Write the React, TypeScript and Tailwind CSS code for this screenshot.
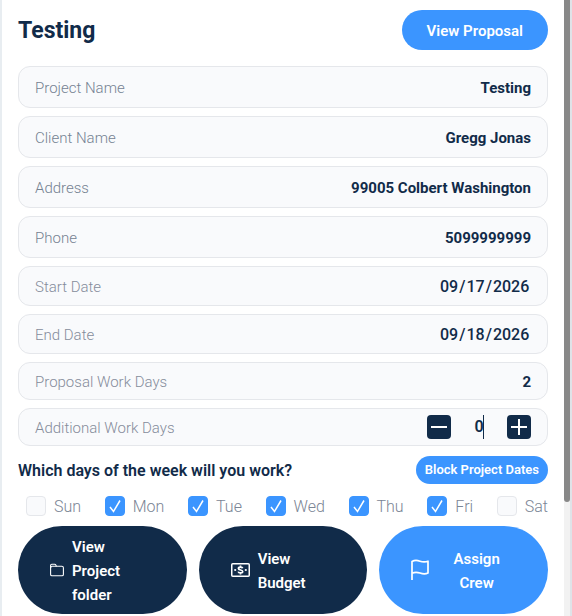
import React, { useState } from "react";

const details = [
  { label: "Project Name", value: "Testing" },
  { label: "Client Name", value: "Gregg Jonas" },
  { label: "Address", value: "99005 Colbert Washington" },
  { label: "Phone", value: "5099999999" },
];

const weekDays = ["Sun", "Mon", "Tue", "Wed", "Thu", "Fri", "Sat"];

const rowClass =
  "flex items-center justify-between rounded-xl border border-[#e5e7eb] bg-[#f9fafc] px-4 text-[15px] font-light";

function FolderIcon() {
  return (
    <svg viewBox="0 0 14 14" className="h-3.5 w-3.5 shrink-0" fill="none" stroke="currentColor" strokeWidth="1.1">
      <path d="M.6 11.500V2.600C.6 1.700 1.100 1.200 1.800 1.200h2.800c.6 0 1 .2 1.200.7l.5 1.300h5.500c1 0 1.600.6 1.600 1.500v6.800c0 .8-.6 1.300-1.400 1.300H2C1.100 12.800.6 12.300.6 11.500Z" />
      <path d="M.6 4.800C.8 3.800 1.400 3.300 2.200 3.300h4.300" />
    </svg>
  );
}

function MoneyIcon() {
  return (
    <svg viewBox="0 0 19 14" className="h-3.5 w-[19px] shrink-0" fill="none" stroke="currentColor">
      <rect x=".75" y=".75" width="17.5" height="12.5" rx="1" strokeWidth="1.5" />
      <path
        d="M11.700 5.200C11.500 4.500 10.700 4.200 9.500 4.200S7.400 4.600 7.400 5.500c0 2 4.300 1 4.300 3 0 1-.9 1.400-2.200 1.400s-2.100-.4-2.300-1.300M9.500 2.600v1.600M9.500 9.900v1.600"
        strokeWidth="1.700"
      />
      <circle cx="4.200" cy="7" r="1.100" fill="currentColor" stroke="none" />
      <circle cx="14.800" cy="7" r="1.100" fill="currentColor" stroke="none" />
    </svg>
  );
}

function FlagIcon() {
  return (
    <svg viewBox="0 0 18 22" className="h-[22px] w-[18px] shrink-0" fill="none" stroke="currentColor" strokeWidth="1.700">
      <path d="M1 21V2.500C4 .8 6.200 1.200 9 2.200c2.800 1 5 1.200 8 0V14c-3 1.400-5.200 1-8 0-2.800-1-5-1.200-8 .2" strokeLinejoin="round" />
    </svg>
  );
}

export default function ProjectPanel() {
  const [startDate, setStartDate] = useState("2026-09-17");
  const [endDate, setEndDate] = useState("2026-09-18");
  const [extraDays, setExtraDays] = useState(0);
  const [workDays, setWorkDays] = useState(["Mon", "Tue", "Wed", "Thu", "Fri"]);

  function toggleDay(day: string) {
    setWorkDays((prev) =>
      prev.includes(day) ? prev.filter((d) => d !== day) : [...prev, day]
    );
  }

  const dates = [
    { id: "start-date", label: "Start Date", value: startDate, onChange: setStartDate },
    { id: "end-date", label: "End Date", value: endDate, onChange: setEndDate },
  ];

  return (
    <div className="flex min-h-screen border-x-2 border-l-[#e8edf1] border-r-[#dfe3e8] bg-white font-[Roboto,sans-serif] text-[#112b49]">
      <main className="min-w-0 flex-1 px-4 pt-2.5">
        <header className="mb-4 flex items-center justify-between">
          <h1 className="pt-0.5 text-[23px] leading-8 font-bold">Testing</h1>
          <button className="h-10 rounded-full bg-[#3b95ff] px-6 pt-0.5 text-[15px] font-semibold text-white">
            <span className="px-px">View Proposal</span>
          </button>
        </header>

        <div className="flex flex-col gap-2">
          {details.map((d) => (
            <div key={d.label} className={`${rowClass} h-[42px] pt-0.5 text-[#758292]`}>
              <span>{d.label}</span>
              <span className="font-bold text-[#112b49]">{d.value}</span>
            </div>
          ))}

          {dates.map((d) => (
            <div key={d.id} className={`${rowClass} h-10 pt-0.5 text-[#858c9b]`}>
              <label htmlFor={d.id}>{d.label}</label>
              <input
                id={d.id}
                type="date"
                value={d.value}
                onChange={(e) => d.onChange(e.target.value)}
                className="w-[92px] bg-transparent text-base font-medium text-[#112b49] focus:outline-none [&::-webkit-calendar-picker-indicator]:hidden"
              />
            </div>
          ))}

          <div className={`${rowClass} h-[38px] pt-0.5 text-[#858c9b]`}>
            <span>Proposal Work Days</span>
            <span className="font-bold text-[#112b49]">2</span>
          </div>

          <div className={`${rowClass} h-[38px] text-[#858c9b]`}>
            <label htmlFor="extra-days" className="pt-0.5">
              Additional Work Days
            </label>
            <div className="flex items-center">
              <button
                aria-label="Remove a day"
                onClick={() => setExtraDays(Math.max(0, extraDays - 1))}
                className="flex size-6 items-center justify-center rounded bg-[#112b49] text-white"
              >
                <svg viewBox="0 0 16 16" className="size-4" stroke="currentColor" strokeWidth="2">
                  <path d="M0 8h16" />
                </svg>
              </button>
              <div className="relative">
                <input
                  id="extra-days"
                  type="text"
                  inputMode="numeric"
                  value={extraDays}
                  onChange={(e) => setExtraDays(Number(e.target.value) || 0)}
                  className="w-14 bg-transparent text-center text-base font-semibold text-[#112b49] caret-transparent focus:outline-none"
                />
                <span className="absolute inset-y-0 left-8 w-px bg-[#112b49]" />
              </div>
              <button
                aria-label="Add a day"
                onClick={() => setExtraDays(extraDays + 1)}
                className="flex size-6 items-center justify-center rounded bg-[#112b49] text-white"
              >
                <svg viewBox="0 0 16 16" className="size-4" stroke="currentColor" strokeWidth="2">
                  <path d="M0 8h16M8 0v16" />
                </svg>
              </button>
            </div>
          </div>
        </div>

        <div className="mt-2.5 flex items-center justify-between">
          <h2 className="pt-0.5 text-base font-semibold">Which days of the week will you work?</h2>
          <button className="h-7 rounded-full bg-[#3b95ff] px-2 text-[13px] font-semibold text-white">
            <span className="px-px">Block Project Dates</span>
          </button>
        </div>

        <div className="mt-[9px] flex justify-between pl-2">
          {weekDays.map((day) => (
            <label key={day} className="flex items-center gap-2 leading-6 font-light text-[#7b8595]">
              <span className="relative flex size-5">
                <input
                  type="checkbox"
                  checked={workDays.includes(day)}
                  onChange={() => toggleDay(day)}
                  className="peer size-5 appearance-none rounded border border-[#e5e7eb] bg-[#f9fafc] checked:border-[#3b95ff] checked:bg-[#3b95ff]"
                />
                <svg
                  viewBox="0 0 20 20"
                  fill="none"
                  className="pointer-events-none absolute inset-0 hidden stroke-white stroke-[1.5] peer-checked:block"
                >
                  <path d="M5 11 8.500 15.500 15 4.500" />
                </svg>
              </span>
              <span className="pt-0.5">{day}</span>
            </label>
          ))}
        </div>

        <div className="mt-[7px] grid grid-cols-3 gap-3 text-[15px] leading-6 font-semibold text-white">
          <button className="flex h-[88px] items-center gap-2 rounded-full bg-[#112b49] px-8 text-left">
            <FolderIcon />
            <span className="pt-0.5">View Project folder</span>
          </button>
          <button className="flex h-[88px] items-center gap-2 rounded-full bg-[#112b49] px-8 text-left">
            <MoneyIcon />
            <span className="pt-0.5">View Budget</span>
          </button>
          <button className="flex h-[88px] items-center rounded-full bg-[#3b95ff] px-8">
            <FlagIcon />
            <span className="flex-1 pt-0.5 pr-4 pl-6">Assign Crew</span>
          </button>
        </div>
      </main>

      <div className="w-1.5 bg-[#f2f2f2]">
        <div className="h-[502px] rounded-b-full bg-[#888888]" />
      </div>
    </div>
  );
}
